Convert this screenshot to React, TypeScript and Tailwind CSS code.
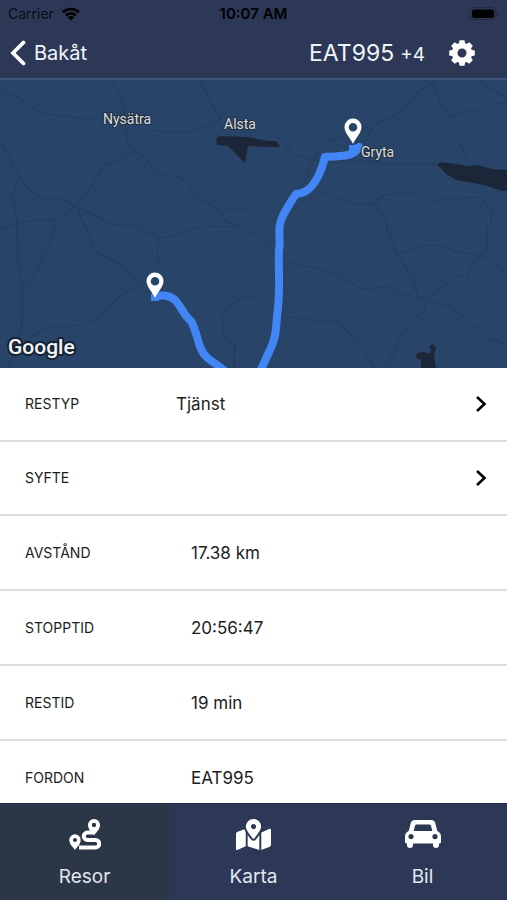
import React from 'react';
import { FaMapMarkedAlt } from 'react-icons/fa';
import clsx from 'clsx';

type TripRow = { label: string; value: string; editable?: boolean };
type Tab = { name: string; icon: React.ReactNode };

const rows: TripRow[] = [
  { label: 'RESTYP', value: 'Tjänst', editable: true },
  { label: 'SYFTE', value: '', editable: true },
  { label: 'AVSTÅND', value: '17.38 km' },
  { label: 'STOPPTID', value: '20:56:47' },
  { label: 'RESTID', value: '19 min' },
  { label: 'FORDON', value: 'EAT995' },
];

const roads = [
  'M0 86 L4 92 L16 96 L30 106 L46 114 L66 116 L84 119 L104 119',
  'M110 80 L119 92 L124 107 L126 134 L129 146 L135 151',
  'M200 80 L208 98 L221 119 L204 127 L186 132 L166 133 L148 129',
  'M135 151 L118 159 L104 166 L92 186 L75 206',
  'M135 151 L144 157 L158 173 L182 178 L200 198 L221 211 L234 208 L254 212',
  'M0 141 L11 161 L18 176 L30 190 L41 198 L62 199 L75 206 L92 213 L110 224 L138 226 L158 238 L170 237 L190 229 L212 226 L236 227 L254 233 L268 246 L275 256',
  'M18 176 L12 198 L17 219 L18 260 L22 284 L22 324 L18 340 L8 368',
  'M0 229 L18 223 L38 220 L56 220 L75 206',
  'M77 207 L83 222 L95 251 L116 262 L132 275 L143 291 L155 292',
  'M56 220 L50 240 L42 260 L36 273 L24 286',
  'M158 238 L157 260 L161 268',
  'M221 211 L225 221 L238 225',
  'M30 337 L48 327 L86 325 L104 313 L119 297 L133 288',
  'M254 296 L240 299 L225 311 L222 316 L224 337 L235 346 L234 368',
  'M434 81 L418 92 L396 115 L376 124 L350 132 L329 141 L318 152 L311 165 L306 180 L298 192',
  'M434 81 L440 104 L449 117 L459 113 L476 110 L492 104 L507 103',
  'M479 80 L507 98',
  'M278 137 L294 154 L318 161 L350 161 L390 164 L436 164',
  'M372 128 L366 140 L350 144',
  'M460 144 L467 159',
  'M318 192 L350 203 L372 204 L384 195 L402 192 L424 196 L432 202 L448 199 L480 197 L492 210 L490 230',
  'M376 204 L386 220 L387 230 L397 254 L411 276 L419 298',
  'M397 254 L412 249 L426 245 L444 246 L456 252 L482 255 L507 274',
  'M487 225 L487 247 L482 255 L474 262 L467 276 L456 277 L434 293 L426 299 L425 309 L412 321 L403 333 L394 350 L388 368',
  'M285 262 L310 267 L340 275 L354 285 L360 289 L388 287 L400 293 L432 300 L450 307 L470 322 L486 337 L507 345',
  'M287 317 L300 318 L314 321 L338 321 L349 333 L365 353 L374 368',
];

const lakes = [
  'M216 139 L220 136 L248 137 L268 141 L276 141 L280 147 L266 147 L248 146 L245 163 L228 146 L217 145Z',
  'M437 164 L441 162 L470 166 L478 165 L492 169 L507 170 L507 191 L502 191 L484 185 L456 180 L446 174Z',
  'M417 353 L424 352 L430 354 L431 350 L429 346 L433 344 L436 348 L434 354 L436 368 L421 368 L421 360 L416 358Z',
];

const places = [
  { name: 'Nysätra', x: 103, y: 124 },
  { name: 'Alsta', x: 224, y: 129 },
  { name: 'Gryta', x: 361, y: 157 },
];

const pins = [
  { x: 353, y: 144 },
  { x: 155, y: 298 },
];

const RouteIcon: React.FC = () => (
  <svg viewBox="0 0 32 32" className="size-8" fill="currentColor" aria-hidden="true">
    <path d="M10 29.500H26.500A3.700 3.700 0 0 0 26.500 22H18.500A3.700 3.700 0 0 1 18.500 14.500H24" fill="none" stroke="currentColor" strokeWidth="4" />
    <path fillRule="evenodd" d="M6 32C4 29 .3 26 .3 22A5.700 5.700 0 0 1 11.700 22C11.700 26 8 29 6 32ZM6 20A2 2 0 1 0 6 24A2 2 0 1 0 6 20Z" />
    <path fillRule="evenodd" d="M25 17.500C23 14.500 19 11.500 19 7A6 6 0 0 1 31 7C31 11.500 27 14.500 25 17.500ZM25 4.700A2.200 2.200 0 1 0 25 9.100A2.200 2.200 0 1 0 25 4.700Z" />
  </svg>
);

const CarIcon: React.FC = () => (
  <svg viewBox="0 0 36 28" className="h-7 w-9" fill="currentColor" aria-hidden="true">
    <path
      fillRule="evenodd"
      d="M10 0H26Q29.500 0 30.300 3.200L32.300 11Q36 12.500 36 16.500V22Q36 23.500 34 23.500V25A3 3 0 0 1 28 25V23.500H8V25A3 3 0 0 1 2 25V23.500Q0 23.500 0 22V16.500Q0 12.500 3.700 11L5.700 3.200Q6.500 0 10 0ZM11.500 4.500Q10.300 4.500 10 5.700L8.700 11H27.300L26 5.700Q25.700 4.500 24.500 4.500ZM6 14A2.600 2.600 0 1 0 6 19.200A2.600 2.600 0 1 0 6 14ZM30 14A2.600 2.600 0 1 0 30 19.200A2.600 2.600 0 1 0 30 14Z"
    />
  </svg>
);

const GearIcon: React.FC = () => (
  <svg viewBox="-13 -13 26 26" className="size-[26px]" fill="currentColor" aria-hidden="true">
    <path
      fillRule="evenodd"
      d="M0-10.200A10.200 10.200 0 1 1 0 10.200A10.200 10.200 0 1 1 0-10.200ZM0-4.500A4.500 4.500 0 1 0 0 4.500A4.500 4.500 0 1 0 0-4.500Z"
    />
    {[0, 45, 90, 135, 180, 225, 270, 315].map((angle) => (
      <path key={angle} d="M-3.200-9L-2.500-12.800H2.500L3.200-9Z" transform={`rotate(${angle})`} />
    ))}
  </svg>
);

const tabs: Tab[] = [
  { name: 'Resor', icon: <RouteIcon /> },
  { name: 'Karta', icon: <FaMapMarkedAlt size={35} /> },
  { name: 'Bil', icon: <CarIcon /> },
];

const StatusBar: React.FC = () => (
  <div className="grid h-7 grid-cols-3 items-center px-2 text-black">
    <div className="flex items-center gap-2 text-sm text-black/80">
      <span>Carrier</span>
      <svg viewBox="0 0 18 14" className="h-3.5 w-[18px]" aria-hidden="true">
        <g fill="none" stroke="#000" strokeWidth="2.600">
          <path d="M1 5.200A11.500 11.500 0 0 1 17 5.200" />
          <path d="M4 8.500A7 7 0 0 1 14 8.500" />
        </g>
        <path d="M9 13.500L6 10.500A4.300 4.300 0 0 1 12 10.500Z" />
      </svg>
    </div>
    <span className="text-center text-[15px] font-semibold">10:07 AM</span>
    <svg viewBox="0 0 30 14" className="h-3.5 w-[30px] justify-self-end" aria-hidden="true">
      <rect x="1" y="0.500" width="26" height="12" rx="4" fill="none" stroke="#212a40" />
      <rect x="3" y="2.500" width="22" height="8.500" rx="2.500" />
      <path d="M28.500 5V9A2.500 2.500 0 0 0 28.500 5Z" fill="#212a40" />
    </svg>
  </div>
);

const Header: React.FC = () => (
  <header className="shrink-0 border-b-2 border-[#40527a] bg-[#2c3856]">
    <StatusBar />
    <div className="flex h-[50px] items-center justify-between pr-8 pl-2.5 text-slate-100">
      <button type="button" className="flex items-center gap-2 text-xl">
        <svg viewBox="0 0 16 26" className="h-[26px] w-4 text-white" aria-hidden="true">
          <path
            d="M13.500 2.500L3 13L13.500 23.500"
            fill="none"
            stroke="currentColor"
            strokeWidth="3.800"
            strokeLinecap="round"
          />
        </svg>
        Bakåt
      </button>
      <div className="flex items-center gap-6">
        <h1 className="flex items-baseline gap-1.5 text-[23px]">
          EAT995 <small className="text-[19px]">+4</small>
        </h1>
        <button type="button" aria-label="Inställningar" className="text-white">
          <GearIcon />
        </button>
      </div>
    </div>
  </header>
);

const TripMap: React.FC = () => (
  <section aria-label="Karta över resan" className="h-[32vh] shrink-0 bg-[#284569]">
    <svg viewBox="0 80 507 288" preserveAspectRatio="xMidYMid slice" className="size-full">
      <g fill="none" stroke="#223d60" strokeWidth="1.200" strokeLinejoin="round">
        {roads.map((d) => (
          <path key={d} d={d} />
        ))}
      </g>
      <g fill="#1b2739">
        {lakes.map((d) => (
          <path key={d} d={d} />
        ))}
      </g>
      <g fill="none" stroke="#4285f4" strokeWidth="8" strokeLinejoin="round">
        <path d="M353 145 L353 150 L359 147 C354 156 345 156 325 157 C322 170 315 186 306 191 C302 194 299 193 296 194 C291 202 282 214 280 224 C278 234 281 240 279 250 C278 270 281 290 277 316 C276 332 275 341 269 352 L260 372" />
        <path d="M155 301 L155 296 C163 295 169 295 175 300 C181 306 184 316 191 321 C196 330 197 339 201 349 C206 360 215 362 226 372" />
      </g>
      {pins.map((pin) => (
        <path
          key={pin.x}
          transform={`translate(${pin.x} ${pin.y})`}
          fill="#fff"
          fillRule="evenodd"
          d="M0 0C-2.500-6-8.500-11-8.500-17A8.500 8.500 0 0 1 8.500-17C8.500-11 2.500-6 0 0ZM0-21A4.300 4.300 0 1 0 0-12.400A4.300 4.300 0 1 0 0-21Z"
        />
      ))}
      <g
        className="font-['Roboto',sans-serif] text-sm"
        fill="#dcdcd8"
        stroke="#233044"
        strokeWidth="2"
        paintOrder="stroke"
      >
        {places.map((place) => (
          <text key={place.name} x={place.x} y={place.y}>
            {place.name}
          </text>
        ))}
      </g>
      <text
        x="8"
        y="354"
        className="font-['Roboto',sans-serif] text-[21px] font-medium"
        fill="#f4f6f8"
        stroke="#172235"
        strokeWidth="4"
        strokeLinejoin="round"
        paintOrder="stroke"
      >
        Google
      </text>
    </svg>
  </section>
);

const DetailRow: React.FC<{ row: TripRow }> = ({ row }) => {
  const content = (
    <>
      <span className={clsx('shrink-0 text-sm', row.editable ? 'w-[151px]' : 'w-[166px]')}>{row.label}</span>
      <span className="flex-1 text-[17px] leading-6">{row.value}</span>
    </>
  );

  if (!row.editable) {
    return <li className="flex h-[75px] items-center border-b-2 border-[#dedede] px-[25px]">{content}</li>;
  }

  return (
    <li className="border-b-2 border-[#dedede]">
      <button type="button" className="flex h-[72px] w-full items-center pr-5 pl-[25px] text-left">
        {content}
        <svg viewBox="0 0 12 18" className="h-[18px] w-3" aria-hidden="true">
          <path d="M2 2L9.500 9L2 16" fill="none" stroke="#000" strokeWidth="2.600" />
        </svg>
      </button>
    </li>
  );
};

const TabBar: React.FC = () => (
  <nav className="grid h-[97px] shrink-0 grid-cols-3 border-t border-[#1f2941] bg-[#2c3856]">
    {tabs.map((tab, index) => (
      <a
        key={tab.name}
        href={`#${tab.name.toLowerCase()}`}
        aria-current={index === 0 ? 'page' : undefined}
        className={clsx(
          'flex flex-col items-center gap-2 pt-2.5 text-[19px] leading-[30px] text-slate-200',
          index === 0 && 'bg-[#2b3647]'
        )}
      >
        <span className="flex h-10 items-center text-white">{tab.icon}</span>
        {tab.name}
      </a>
    ))}
  </nav>
);

export default function App() {
  return (
    <div className="flex h-screen flex-col bg-white font-['Inter',sans-serif] text-[#1c1c1c]">
      <Header />
      <TripMap />
      <main className="min-h-0 flex-1 overflow-y-auto [scrollbar-width:none]">
        <ul>
          {rows.map((row) => (
            <DetailRow key={row.label} row={row} />
          ))}
        </ul>
      </main>
      <TabBar />
    </div>
  );
}
